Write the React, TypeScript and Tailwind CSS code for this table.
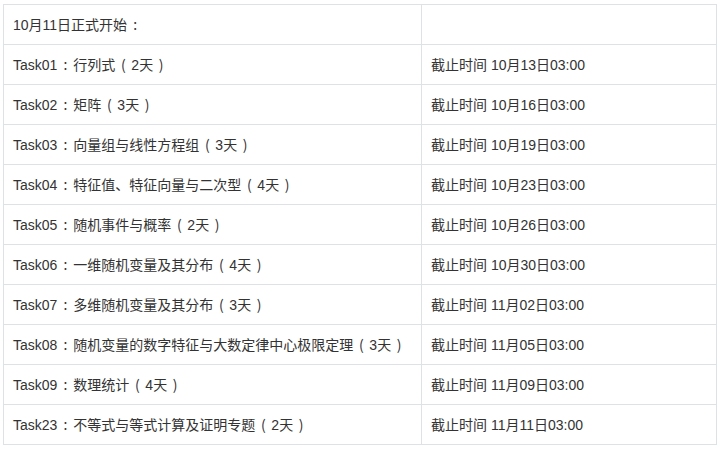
const rows: Array<[string, string]> = [
  ["10月11日正式开始：", ""],
  ["Task01：行列式（2天）", "截止时间 10月13日03:00"],
  ["Task02：矩阵（3天）", "截止时间 10月16日03:00"],
  ["Task03：向量组与线性方程组（3天）", "截止时间 10月19日03:00"],
  ["Task04：特征值、特征向量与二次型（4天）", "截止时间 10月23日03:00"],
  ["Task05：随机事件与概率（2天）", "截止时间 10月26日03:00"],
  ["Task06：一维随机变量及其分布（4天）", "截止时间 10月30日03:00"],
  ["Task07：多维随机变量及其分布（3天）", "截止时间 11月02日03:00"],
  ["Task08：随机变量的数字特征与大数定律中心极限定理（3天）", "截止时间 11月05日03:00"],
  ["Task09：数理统计（4天）", "截止时间 11月09日03:00"],
  ["Task23：不等式与等式计算及证明专题（2天）", "截止时间 11月11日03:00"],
];

// full-width colon and brackets sit centred in a wide box in the reference
function Label({ text }: { text: string }) {
  return (
    <>
      {text.split(/([：（）])/).map((part, i) =>
        part === "：" || part === "（" || part === "）" ? (
          <span
            key={i}
            className="inline-flex w-[16px] justify-center font-['Noto_Sans_CJK_KR',sans-serif] [font-variant-east-asian:proportional-width]"
          >
            {part}
          </span>
        ) : (
          <span key={i}>{part}</span>
        )
      )}
    </>
  );
}

export default function App() {
  return (
    <div className="min-h-[449px] bg-white pl-[3px] pt-[4px] font-['Liberation_Sans','Noto_Sans_CJK_SC',sans-serif] text-[14px] text-[#333]">
      <table className="w-[714px] table-fixed border-collapse">
        <colgroup>
          <col className="w-[418px]" />
          <col />
        </colgroup>
        <tbody>
          {rows.map(([task, deadline], index) => (
            <tr key={index} className="h-[40px]">
              <td className="whitespace-nowrap border border-[#dfe2e5] px-[9px] py-0 leading-[20px]">
                <Label text={task} />
              </td>
              <td className="whitespace-nowrap border border-[#dfe2e5] px-[9px] py-0 leading-[20px]">{deadline}</td>
            </tr>
          ))}
        </tbody>
      </table>
    </div>
  );
}
